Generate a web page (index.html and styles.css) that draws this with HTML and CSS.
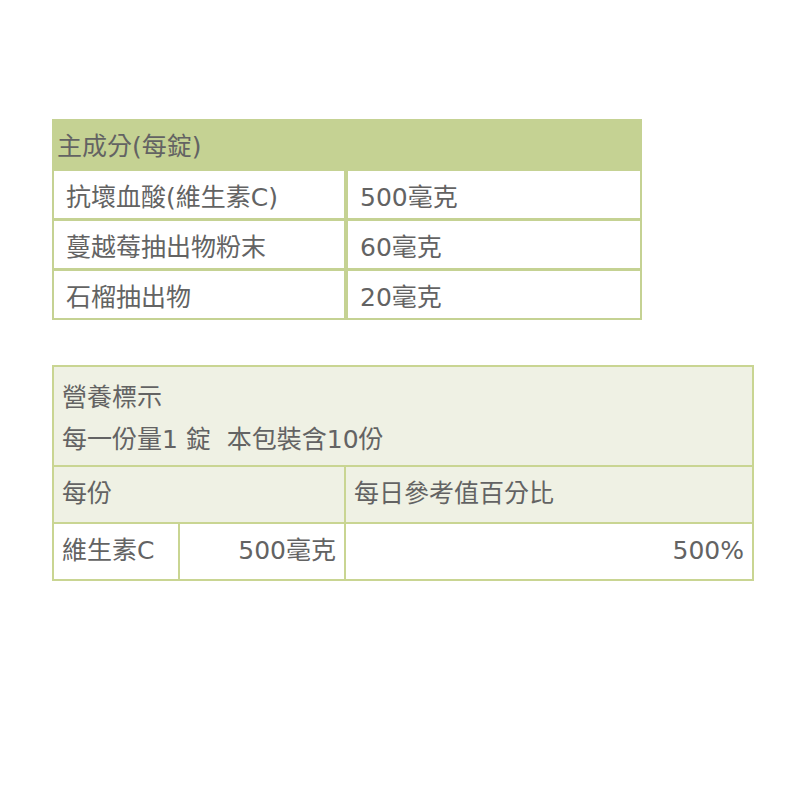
FILE: index.html
```html
<!DOCTYPE html>
<html lang="zh-Hant">
<head>
<meta charset="utf-8">
<link rel="stylesheet" href="styles.css">
</head>
<body>
<div class="page">
  <div class="ingredients">
    <div class="ing-head">主成分(每錠)</div>
    <div class="ing-cell">抗壞血酸(維生素C)</div>
    <div class="ing-cell">500毫克</div>
    <div class="ing-cell">蔓越莓抽出物粉末</div>
    <div class="ing-cell">60毫克</div>
    <div class="ing-cell">石榴抽出物</div>
    <div class="ing-cell">20毫克</div>
  </div>

  <table class="nutrition">
    <colgroup>
      <col class="c1"><col class="c2"><col class="c3">
    </colgroup>
    <tr class="shade">
      <td colspan="3" class="intro">營養標示<br>每一份量1 錠&nbsp;&nbsp;本包裝含10份</td>
    </tr>
    <tr class="shade">
      <td colspan="2">每份</td>
      <td>每日參考值百分比</td>
    </tr>
    <tr>
      <td>維生素C</td>
      <td class="num">500毫克</td>
      <td class="num">500%</td>
    </tr>
  </table>
</div>
</body>
</html>
```

FILE: styles.css
```css
html, body {
  margin: 0;
  padding: 0;
  background: #ffffff;
}

body {
  font-family: "DejaVu Sans", "Noto Sans CJK TC", sans-serif;
  font-size: 25px;
  color: #636363;
}

.page {
  padding: 119px 0 0 52px;
  display: flex;
  flex-direction: column;
  align-items: flex-start;
  gap: 45px;
}

.ingredients {
  display: grid;
  grid-template-columns: 290px 292px;
  grid-template-rows: 49px repeat(3, 47px);
  column-gap: 4px;
  row-gap: 3px;
  padding: 0 2px 2px 2px;
  background: #c5d293;
}

.ing-head {
  grid-column: 1 / 3;
  margin: 0 -2px;
  padding-left: 5px;
  display: flex;
  align-items: center;
  background: #c5d293;
}

.ing-cell {
  background: #ffffff;
  padding-left: 12px;
  display: flex;
  align-items: center;
}

.nutrition {
  border-collapse: collapse;
  table-layout: fixed;
  width: 700px;
  border: 2px solid #c9d592;
}

.nutrition col.c1 { width: 126px; }
.nutrition col.c2 { width: 166px; }
.nutrition col.c3 { width: 408px; }

.nutrition td {
  border: 2px solid #c9d592;
  padding: 7px 8px 8px;
  line-height: 40px;
  white-space: nowrap;
}

.nutrition tr.shade td {
  background: #eff1e4;
}

.nutrition td.intro {
  line-height: 42px;
  padding-top: 10px;
  padding-bottom: 4px;
}

.nutrition td.num {
  text-align: right;
}
```
